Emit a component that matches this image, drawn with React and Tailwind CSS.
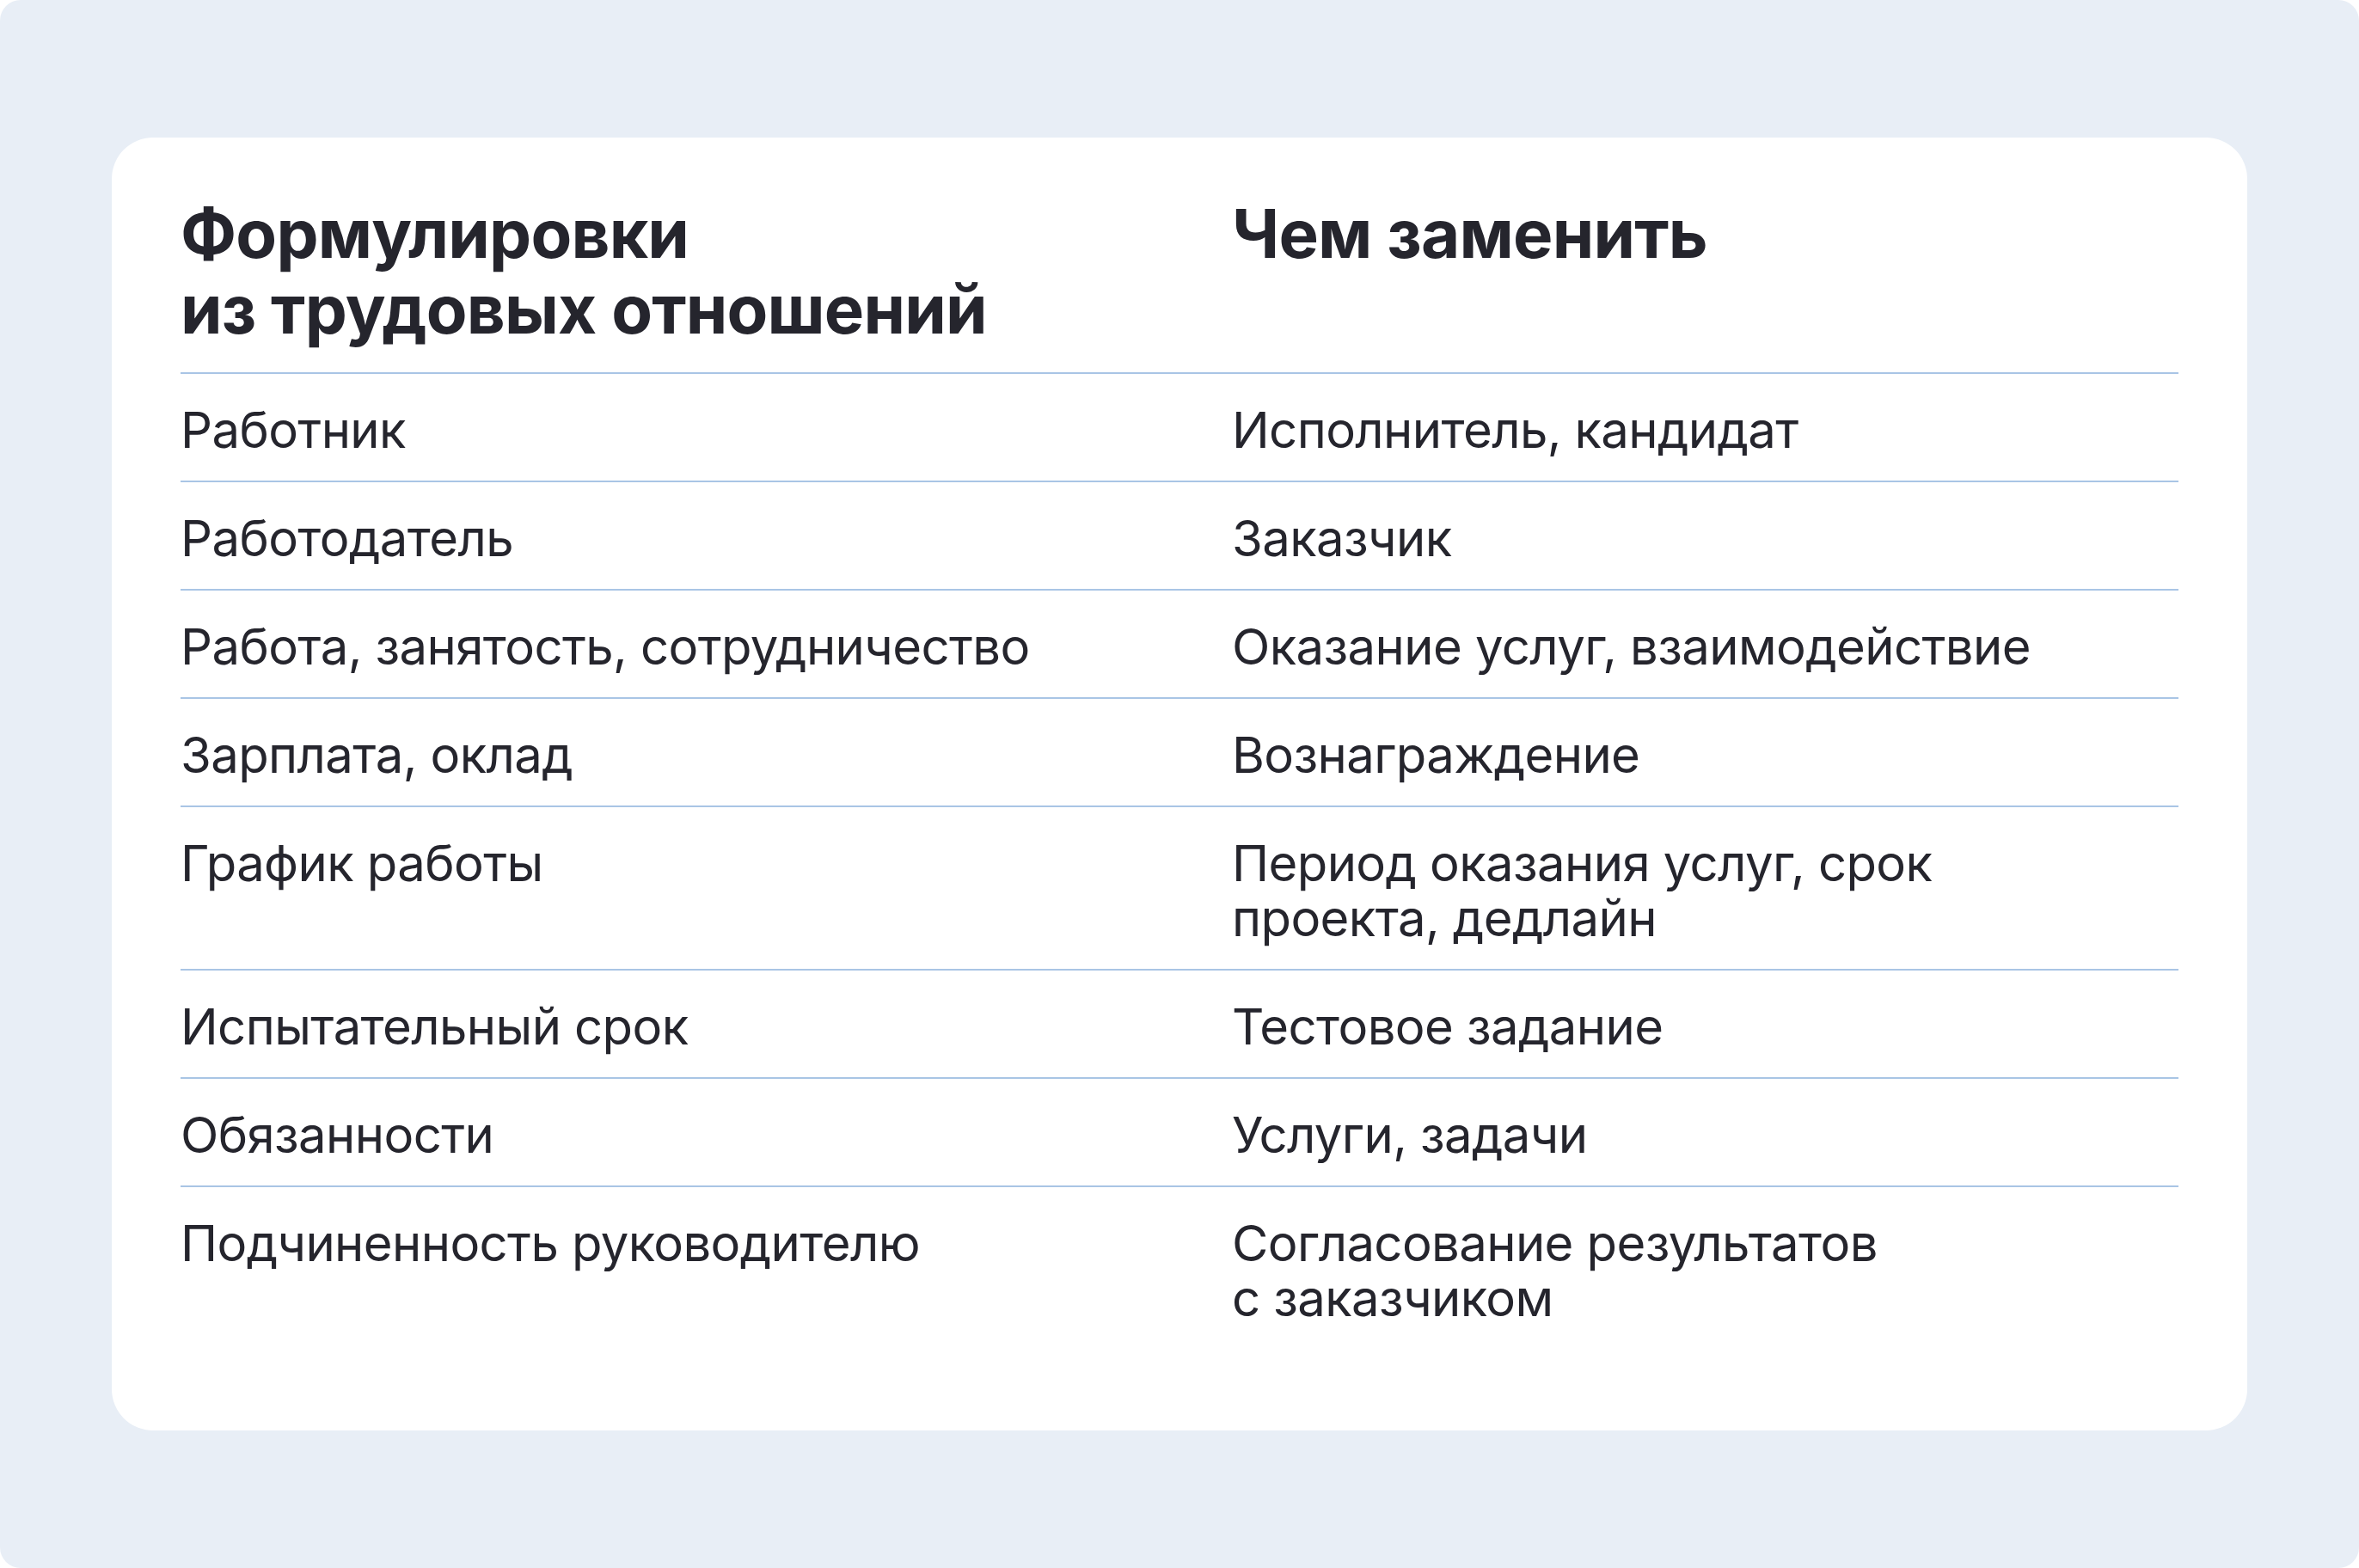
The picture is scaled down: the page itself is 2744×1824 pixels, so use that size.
import React from "react";

const rows = [
  { from: "Работник", to: ["Исполнитель, кандидат"] },
  { from: "Работодатель", to: ["Заказчик"] },
  { from: "Работа, занятость, сотрудничество", to: ["Оказание услуг, взаимодействие"] },
  { from: "Зарплата, оклад", to: ["Вознаграждение"] },
  { from: "График работы", to: ["Период оказания услуг, срок", "проекта, дедлайн"] },
  { from: "Испытательный срок", to: ["Тестовое задание"] },
  { from: "Обязанности", to: ["Услуги, задачи"] },
  { from: "Подчиненность руководителю", to: ["Согласование результатов", "с заказчиком"] },
];

const App = () => {
  return (
    <div className="w-[2744px] h-[1824px] bg-white">
      <div
        className="w-full h-full rounded-[24px] bg-[#e8eef6] px-[130px] py-[160px] text-[#25252d]"
        style={{ fontFamily: "Inter, 'Noto Sans', sans-serif" }}
      >
        <div className="h-full bg-white rounded-[48px] px-[80px] pt-[68px]">
          {/* header */}
          <div className="grid grid-cols-[1223px_1fr] pb-[29px] border-b-2 border-[#a9c5e5] text-[78px] leading-[88px] font-bold tracking-[-0.8px]">
            <div>
              Формулировки
              <br />
              из трудовых отношений
            </div>
            <div>Чем заменить</div>
          </div>

          {rows.map((row, i) => (
            <div
              key={i}
              className={
                "grid grid-cols-[1223px_1fr] pt-[33px] pb-[27px] text-[58px] leading-[64px] tracking-[-0.6px] " +
                (i < rows.length - 1 ? "border-b-2 border-[#a9c5e5]" : "")
              }
            >
              <div>{row.from}</div>
              <div>
                {row.to.map((line, j) => (
                  <div key={j}>{line}</div>
                ))}
              </div>
            </div>
          ))}
        </div>
      </div>
    </div>
  );
};

export default App;
